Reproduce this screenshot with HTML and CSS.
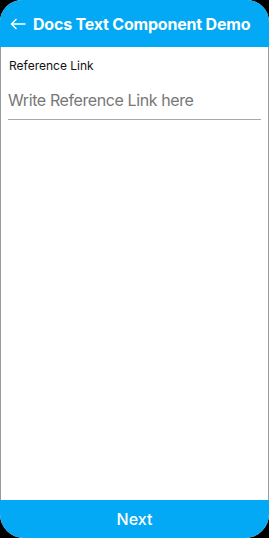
FILE: index.html
```html
<html>
<head>
  <meta charset="utf-8">
  <title>Docs Text Component Demo</title>
  <link rel="stylesheet" href="styles.css">
</head>
<body>
  <div class="phone">
    <header class="topbar">
      <svg class="back" width="16" height="12" viewBox="0 0 16 12">
        <path d="M15.5 6H1.5M6.5 1L1.5 6L6.5 11" fill="none" stroke="#fff" stroke-width="1.4"/>
      </svg>
      <h1 class="title">Docs Text Component Demo</h1>
    </header>
    <main class="content">
      <label class="field-label" for="ref">Reference Link</label>
      <input class="field-input" id="ref" type="text" placeholder="Write Reference Link here">
    </main>
    <footer class="bottombar">Next</footer>
  </div>
</body>
</html>
```
FILE: styles.css
```css
html, body {
  margin: 0;
  height: 100%;
  background-color: #000;
}

body {
  font-family: Inter, 'Noto Sans', sans-serif;
}

.phone {
  height: 538px;
  display: flex;
  flex-direction: column;
  background-color: #fff;
  border-radius: 22px 22px 24px 24px;
  overflow: hidden;
}

.topbar {
  height: 47px;
  display: flex;
  align-items: center;
  padding: 0 0 0 10px;
  gap: 7px;
  background-color: #03a9f4;
  color: #fff;
}

.back {
  flex: none;
  margin-top: 1px;
}

.title {
  margin: 0;
  font-size: 16px;
  font-weight: 700;
  letter-spacing: -0.2px;
  white-space: nowrap;
}

.content {
  flex: 1;
  display: flex;
  flex-direction: column;
  padding: 12px 7px 0 7px;
  border-left: 1px solid #999;
  border-right: 1px solid #999;
}

.field-label {
  font-size: 12px;
  color: #111;
  line-height: 15px;
  padding-left: 1px;
  margin-top: -1px;
}

.field-input {
  margin-top: 13px;
  border: none;
  border-bottom: 1px solid #aaa;
  padding: 4px 0 9px 0;
  font-family: inherit;
  font-size: 16px;
  letter-spacing: -0.4px;
  color: #333;
  outline: none;
  background: transparent;
}

.field-input::placeholder {
  color: #777;
}

.bottombar {
  height: 38px;
  display: flex;
  align-items: center;
  justify-content: center;
  background-color: #03a9f4;
  color: #fff;
  font-size: 16px;
  font-weight: 500;
}
```
